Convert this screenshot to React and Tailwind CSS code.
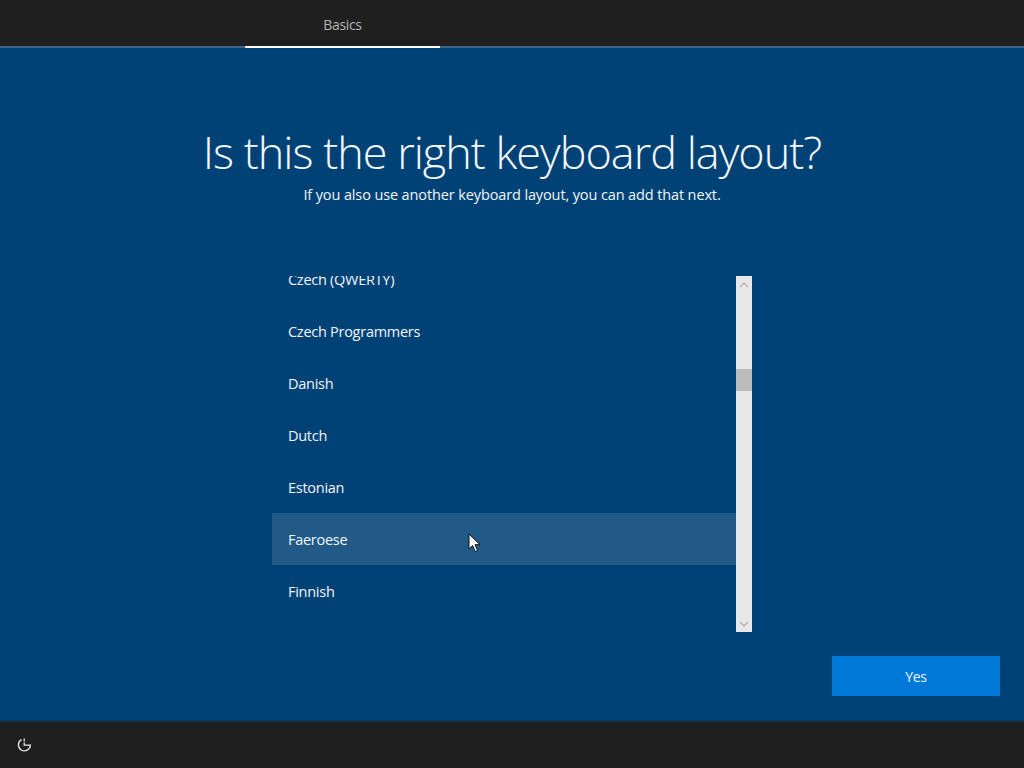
const rows = ["Czech (QWERTY)", "Czech Programmers", "Danish", "Dutch", "Estonian", "Faeroese", "Finnish"];

export default function App() {
  return (
    <div className="relative w-[1024px] h-[768px] flex flex-col overflow-hidden bg-[#004275] text-white font-['Open_Sans',sans-serif]">
      <header className="h-12 shrink-0 bg-[#1f1f1f] flex items-start border-b-2 border-[#3f6488]">
        <div className="ml-[245px] w-[195px] h-12 border-b-2 border-white flex justify-center pt-[15px] text-[14px] leading-[20px] text-[#b5b5b5] tracking-[-0.35px] box-border">
          Basics
        </div>
      </header>

      <main className="flex-1 flex flex-col items-center relative">
        <h1 className="mt-[76px] text-[45px] leading-[56px] font-light text-[#f4f8fb] tracking-[-1px]">Is this the right keyboard layout?</h1>
        <p className="mt-[5px] text-[14.5px] leading-[20px] text-[#f0f5f9] tracking-[-0.12px]">If you also use another keyboard layout, you can add that next.</p>

        <div className="mt-[71px] w-[480px] h-[356px] flex">
          <ul className="w-[464px] h-full overflow-hidden">
            {rows.map((r, i) => (
              <li
                key={r}
                className={`h-[52px] flex items-center pl-4 pt-[2px] text-[14.5px] text-[#f0f5f9] tracking-[-0.27px] ${i === 0 ? "-mt-[23px]" : ""} ${r === "Faeroese" ? "bg-[#215a87]" : ""}`}
              >
                {r}
              </li>
            ))}
          </ul>
          <div className="w-4 h-full bg-[#e8e8e8] flex flex-col items-center relative">
            <div className="h-[17px] flex items-center justify-center">
              <svg width="10" height="6" viewBox="0 0 10 6" fill="none" stroke="#b4b8bb" strokeWidth="1.5"><path d="M1 5l4-4 4 4" /></svg>
            </div>
            <div className="mt-[76px] w-full h-[22px] bg-[#bcbcbc]" />
            <div className="mt-auto h-[17px] flex items-center justify-center">
              <svg width="10" height="6" viewBox="0 0 10 6" fill="none" stroke="#b4b8bb" strokeWidth="1.5"><path d="M1 1l4 4 4-4" /></svg>
            </div>
          </div>
        </div>

        <div className="w-full flex justify-end pr-6 mt-6">
          <button className="w-[168px] h-10 bg-[#0078d7] text-[14px] text-[#e8f6ff] tracking-[-0.3px]">Yes</button>
        </div>

        <svg className="absolute left-[468px] top-[485px]" width="13" height="20" viewBox="0 0 13 20">
          <path d="M1 1v15l3.6-3.4 2.6 6 2.4-1-2.6-5.9h5z" fill="#fff" stroke="#111" strokeWidth="1" />
        </svg>
      </main>

      <footer className="h-12 shrink-0 bg-[#1f1f1f] border-t-2 border-[#0f3554] flex items-center pl-4">
        <svg width="16" height="16" viewBox="0 0 16 16" fill="none" stroke="#e6e6e6" strokeWidth="1.3">
          <path d="M5.5 2.6A6 6 0 1 0 14.4 8.2H8.2V5.5" />
          <path d="M8.2 4.6V1.6" />
        </svg>
      </footer>
    </div>
  );
}
